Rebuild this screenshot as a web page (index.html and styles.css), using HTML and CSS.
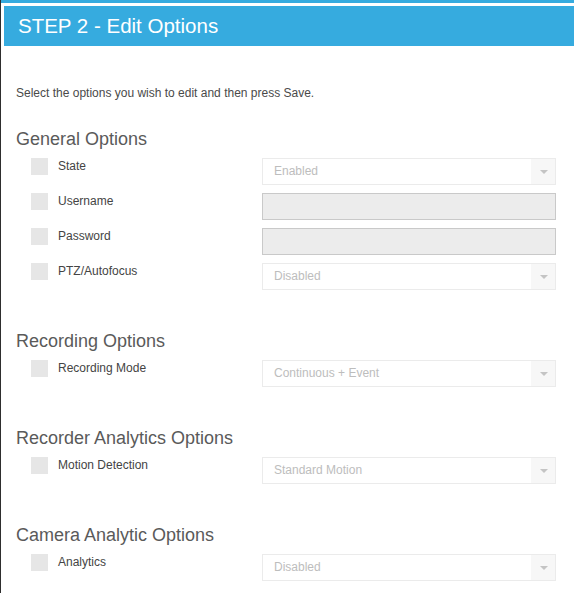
FILE: index.html
```html
<!DOCTYPE html>
<html>
<head>
<meta charset="utf-8">
<link rel="stylesheet" href="styles.css">
</head>
<body>
<div class="page">
  <div class="strip"></div>
  <div class="header"><h1 class="title">STEP 2 - Edit Options</h1></div>
  <div class="content">
    <p class="desc">Select the options you wish to edit and then press Save.</p>

    <section class="section">
      <h2 class="sec-title">General Options</h2>
      <div class="rows">
        <div class="row"><span class="check"></span><span class="label">State</span>
          <div class="select"><span class="sel-text">Enabled</span><span class="arrow"></span></div></div>
        <div class="row"><span class="check"></span><span class="label">Username</span>
          <div class="input"></div></div>
        <div class="row"><span class="check"></span><span class="label">Password</span>
          <div class="input"></div></div>
        <div class="row"><span class="check"></span><span class="label">PTZ/Autofocus</span>
          <div class="select"><span class="sel-text">Disabled</span><span class="arrow"></span></div></div>
      </div>
    </section>

    <section class="section">
      <h2 class="sec-title">Recording Options</h2>
      <div class="rows">
        <div class="row"><span class="check"></span><span class="label">Recording Mode</span>
          <div class="select"><span class="sel-text">Continuous + Event</span><span class="arrow"></span></div></div>
      </div>
    </section>

    <section class="section">
      <h2 class="sec-title">Recorder Analytics Options</h2>
      <div class="rows">
        <div class="row"><span class="check"></span><span class="label">Motion Detection</span>
          <div class="select"><span class="sel-text">Standard Motion</span><span class="arrow"></span></div></div>
      </div>
    </section>

    <section class="section">
      <h2 class="sec-title">Camera Analytic Options</h2>
      <div class="rows">
        <div class="row"><span class="check"></span><span class="label">Analytics</span>
          <div class="select"><span class="sel-text">Disabled</span><span class="arrow"></span></div></div>
      </div>
    </section>
  </div>
</div>
</body>
</html>
```

FILE: styles.css
```css
html, body {
  margin: 0;
  padding: 0;
  background: #fff;
}
body {
  font-family: "Liberation Sans", Arial, sans-serif;
  overflow: hidden;
}
.page {
  border-left: 1px solid #2e2e2e;
  min-height: 593px;
  box-sizing: border-box;
}
.strip {
  height: 3px;
  background: #36abdf;
}
.header {
  margin: 3px 0 0 3px;
  height: 40px;
  background: #36abdf;
  display: flex;
  align-items: center;
}
.title {
  margin: 0 0 0 14px;
  font-size: 20.5px;
  font-weight: normal;
  color: #fff;
  line-height: 24px;
}
.content {
  padding: 0 18px 0 15px;
}
.desc {
  margin: 39px 0 0 0;
  font-size: 12px;
  line-height: 16px;
  color: #4a4a4a;
}
.section {
  margin-top: 40px;
}
.section:first-of-type {
  margin-top: 27px;
}
.sec-title {
  margin: 0;
  font-size: 18px;
  font-weight: normal;
  line-height: 22px;
  color: #5a5a5a;
}
.rows {
  margin-top: 8px;
  display: flex;
  flex-direction: column;
  gap: 8px;
}
.row {
  display: flex;
  align-items: flex-start;
  padding-left: 15px;
  height: 27px;
}
.check {
  width: 17px;
  height: 17px;
  background: #e6e6e6;
  margin-right: 10px;
  flex: none;
}
.label {
  width: 204px;
  flex: none;
  font-size: 12px;
  line-height: 16px;
  color: #444;
}
.select {
  width: 294px;
  height: 27px;
  box-sizing: border-box;
  border: 1px solid #ebebeb;
  background: #fff;
  display: flex;
  align-items: center;
}
.sel-text {
  flex: 1;
  padding-left: 11px;
  padding-bottom: 2px;
  font-size: 12px;
  line-height: 14px;
  color: #bdbdbd;
}
.arrow {
  width: 24px;
  align-self: stretch;
  background: #f7f7f7;
  display: flex;
  align-items: center;
  justify-content: center;
}
.arrow::after {
  content: "";
  width: 0;
  height: 0;
  border-left: 4px solid transparent;
  border-right: 4px solid transparent;
  border-top: 4px solid #c4c4c4;
  margin-left: 1px;
}
.input {
  width: 294px;
  height: 27px;
  box-sizing: border-box;
  border: 1px solid #c9c9c9;
  background: #ececec;
}
```
